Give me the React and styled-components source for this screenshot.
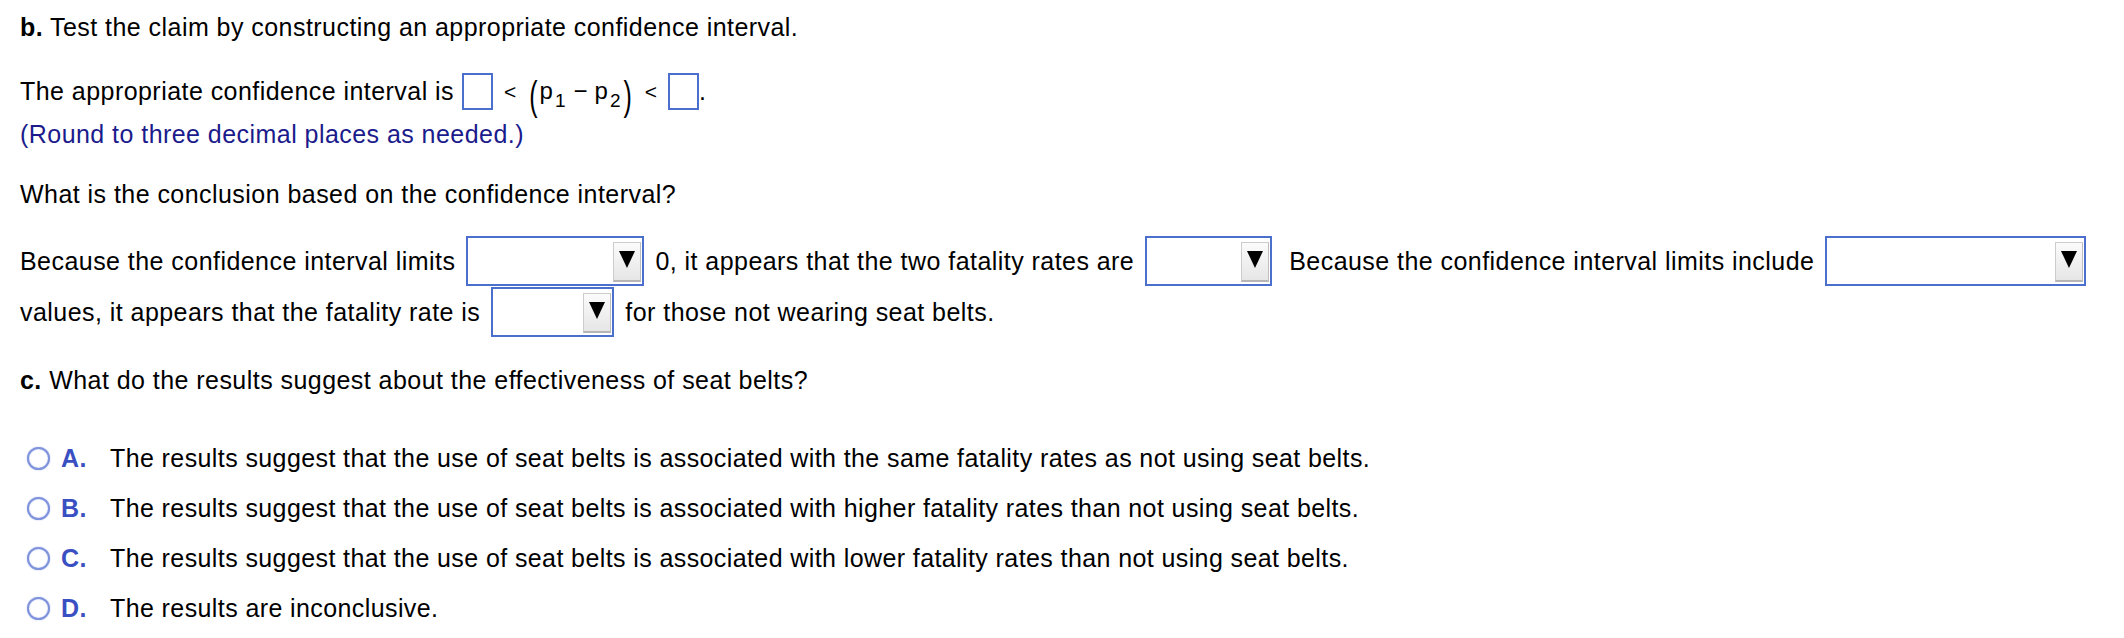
import React from "react";
import styled, { createGlobalStyle } from "styled-components";

const GlobalStyle = createGlobalStyle`
  body {
    margin: 0;
    background: #fff;
    color: #000;
    font-family: "Liberation Sans", Arial, Helvetica, sans-serif;
  }
`;

const options = [
  { key: "A", text: "The results suggest that the use of seat belts is associated with the same fatality rates as not using seat belts." },
  { key: "B", text: "The results suggest that the use of seat belts is associated with higher fatality rates than not using seat belts." },
  { key: "C", text: "The results suggest that the use of seat belts is associated with lower fatality rates than not using seat belts." },
  { key: "D", text: "The results are inconclusive." },
];

const Dropdown = ({ width }) => (
  <Select $w={width}>
    <ArrowButton>
      <Arrow />
    </ArrowButton>
  </Select>
);

const App = () => {
  return (
    <Page>
      <GlobalStyle />
      <Line>
        <b>b.</b> Test the claim by constructing an appropriate confidence interval.
      </Line>

      <CIRow>
        <span>The appropriate confidence interval is</span>
        <AnswerBox $ml={8} />
        <MathGroup>
          <Lt>&lt;</Lt>
          <Paren>(</Paren>
          <Var>p</Var>
          <Sub>1</Sub>
          <Minus>−</Minus>
          <Var>p</Var>
          <Sub>2</Sub>
          <Paren>)</Paren>
          <Lt>&lt;</Lt>
        </MathGroup>
        <AnswerBox $ml={0} />
        <span>.</span>
      </CIRow>
      <Hint>(Round to three decimal places as needed.)</Hint>

      <Question>What is the conclusion based on the confidence interval?</Question>

      <Conclusion>
        <Chunk>Because the confidence interval limits</Chunk>
        <Dropdown width={178} />
        <Chunk>0, it appears that the two fatality rates are</Chunk>
        <Dropdown width={127} />
        <Chunk $ml={6}>Because the confidence interval limits include</Chunk>
        <Dropdown width={261} />
        <Chunk>values, it appears that the fatality rate is</Chunk>
        <Dropdown width={123} />
        <Chunk>for those not wearing seat belts.</Chunk>
      </Conclusion>

      <PartC>
        <b>c.</b> What do the results suggest about the effectiveness of seat belts?
      </PartC>

      <OptionList>
        {options.map((o) => (
          <Option key={o.key}>
            <Radio />
            <Letter>{o.key}.</Letter>
            <span>{o.text}</span>
          </Option>
        ))}
      </OptionList>
    </Page>
  );
};

export default App;

const Page = styled.div`
  padding: 12px 20px 0 20px;
  font-size: 25px;
  letter-spacing: 0.45px;
`;

const Line = styled.div`
  line-height: 30px;
  white-space: nowrap;
`;

const CIRow = styled.div`
  display: flex;
  align-items: center;
  height: 40px;
  margin-top: 29px;
  white-space: nowrap;
`;

const AnswerBox = styled.span`
  display: inline-block;
  box-sizing: border-box;
  width: 31px;
  height: 37px;
  border: 2px solid #4a6fcc;
  background: #fff;
  margin-left: ${(p) => p.$ml}px;
`;

const MathGroup = styled.span`
  display: inline-flex;
  align-items: center;
  padding-top: 5px;
  font-size: 24px;
  letter-spacing: 0;
`;

const Lt = styled.span`
  font-size: 21px;
  margin: 0 11px 4px;
`;

const Paren = styled.span`
  display: inline-block;
  font-size: 25px;
  transform: scaleY(1.6);
  margin: 6px 2px 0;
`;

const Var = styled.span`
  display: inline-block;
  margin-bottom: 6px;
`;

const Sub = styled.span`
  font-size: 19px;
  margin: 14px 1px 0 2px;
`;

const Minus = styled.span`
  margin: 0 7px 5px;
`;

const Hint = styled.div`
  color: #1b1b8c;
  line-height: 30px;
  margin-top: 8px;
`;

const Question = styled.div`
  line-height: 30px;
  margin-top: 30px;
`;

const Conclusion = styled.div`
  display: flex;
  flex-wrap: wrap;
  align-items: center;
  column-gap: 11px;
  row-gap: 1px;
  margin-top: 27px;
`;

const Chunk = styled.span`
  white-space: nowrap;
  margin-left: ${(p) => p.$ml || 0}px;
`;

const Select = styled.span`
  display: inline-flex;
  justify-content: flex-end;
  align-items: center;
  box-sizing: border-box;
  width: ${(p) => p.$w}px;
  height: 50px;
  padding: 3px 1px 2px 0;
  border: 2px solid #4a6fcc;
  background: #fff;
`;

const ArrowButton = styled.span`
  display: flex;
  justify-content: center;
  align-items: center;
  box-sizing: border-box;
  width: 28px;
  height: 40px;
  padding-bottom: 4px;
  border: 1px solid #cccccc;
  border-bottom: 2px solid #b5b5b5;
  border-right-color: #bfbfbf;
  background: linear-gradient(#fbfbfb, #e6e6e6);
`;

const Arrow = styled.span`
  width: 0;
  height: 0;
  border-left: 8.5px solid transparent;
  border-right: 8.5px solid transparent;
  border-top: 17px solid #000;
`;

const PartC = styled.div`
  line-height: 30px;
  margin-top: 28px;
`;

const OptionList = styled.div`
  margin-top: 38px;
`;

const Option = styled.div`
  display: flex;
  align-items: center;
  height: 50px;
  white-space: nowrap;
  letter-spacing: 0.4px;
`;

const Radio = styled.span`
  box-sizing: border-box;
  width: 23px;
  height: 23px;
  margin: 0 11px 0 7px;
  border-radius: 50%;
  border: 2.5px solid #7f92dc;
  background: #fff;
  box-shadow: inset 0 0 1.5px #b9c3ef, 0 0 1.5px #aab6ec;
`;

const Letter = styled.span`
  width: 49px;
  font-weight: 700;
  color: #3a4fc2;
`;
